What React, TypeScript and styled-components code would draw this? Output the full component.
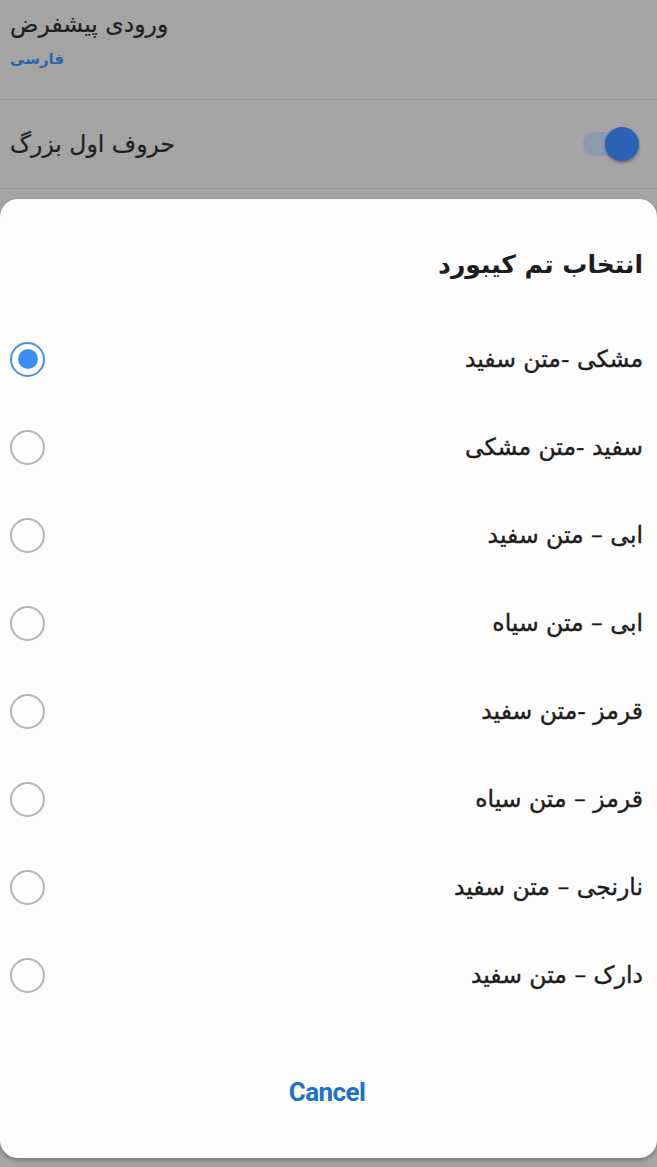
import { useState } from "react";
import styled, { createGlobalStyle } from "styled-components";

const GlobalStyle = createGlobalStyle`
  html, body {
    margin: 0;
    padding: 0;
    background: #a4a4a4;
  }
  body {
    font-family: "DejaVu Sans", "Noto Sans", sans-serif;
  }
`;

const Page = styled.div`
  width: 657px;
  height: 1167px;
  overflow: hidden;
  display: flex;
  flex-direction: column;
  background: #a4a4a4;
`;

const SettingRow = styled.div<{ height: number }>`
  height: ${({ height }) => height}px;
  box-sizing: border-box;
  padding: 0 22px 0 10px;
  display: flex;
  align-items: center;
  justify-content: space-between;
  border-bottom: 1px solid #959595;
`;

const SettingText = styled.div`
  display: flex;
  flex-direction: column;
  align-items: flex-start;
  gap: 12px;
  margin-top: -22px;
`;

const SettingTitle = styled.div`
  font-size: 23.5px;
  color: #1e1e1e;
  -webkit-text-stroke: 0.2px #1e1e1e;
`;

const SettingValue = styled.div`
  font-size: 15px;
  font-weight: bold;
  color: #2c66ad;
`;

const Toggle = styled.div`
  position: relative;
  width: 52px;
  height: 24px;
  border-radius: 12px;
  background: #8c9ab0;
`;

const ToggleThumb = styled.div`
  position: absolute;
  right: -4px;
  top: -5px;
  width: 34px;
  height: 34px;
  border-radius: 50%;
  background: #2d63b6;
  box-shadow: 0 2px 3px rgba(0, 0, 0, 0.35);
`;

const Sheet = styled.div`
  margin-top: 10px;
  height: 959px;
  background: #fdfdfd;
  border-radius: 18px;
  box-shadow: 0 2px 4px rgba(0, 0, 0, 0.3);
  display: flex;
  flex-direction: column;
`;

const SheetTitle = styled.div`
  padding: 50px 14px 34px;
  line-height: 32px;
  font-size: 25px;
  font-weight: bold;
  color: #1d1d1d;
  text-align: right;
  direction: rtl;
`;

const OptionRow = styled.label`
  height: 88px;
  display: flex;
  align-items: center;
  justify-content: space-between;
  padding: 0 14px 0 10px;
  cursor: pointer;
`;

const Radio = styled.span<{ checked: boolean }>`
  width: 35px;
  height: 35px;
  box-sizing: border-box;
  border-radius: 50%;
  border: 2px solid ${({ checked }) => (checked ? "#4a8fe6" : "#b3b3b3")};
  display: flex;
  align-items: center;
  justify-content: center;
  &::after {
    content: "";
    width: 20px;
    height: 20px;
    border-radius: 50%;
    background: ${({ checked }) => (checked ? "#3d8cf5" : "transparent")};
  }
`;

const OptionLabel = styled.span`
  direction: rtl;
  font-size: 23.5px;
  color: #1d1d1d;
  -webkit-text-stroke: 0.4px #1d1d1d;
`;

const Footer = styled.div`
  padding: 55px 0 48px;
  display: flex;
  justify-content: center;
`;

const CancelButton = styled.button`
  background: none;
  border: 0;
  padding: 0;
  margin-right: 3px;
  line-height: 36px;
  font-family: Roboto, "Liberation Sans", sans-serif;
  font-size: 26px;
  font-weight: bold;
  color: #1b72c8;
  letter-spacing: -0.6px;
  cursor: pointer;
`;

const themes = [
  "مشکی -متن سفید",
  "سفید -متن مشکی",
  "ابی – متن سفید",
  "ابی – متن سیاه",
  "قرمز -متن سفید",
  "قرمز – متن سیاه",
  "نارنجی – متن سفید",
  "دارک – متن سفید",
];

export default function App() {
  const [selected, setSelected] = useState(0);

  return (
    <>
      <GlobalStyle />
      <Page>
        <SettingRow height={100}>
          <SettingText>
            <SettingTitle dir="rtl">ورودی پیشفرض</SettingTitle>
            <SettingValue dir="rtl">فارسی</SettingValue>
          </SettingText>
        </SettingRow>
        <SettingRow height={89}>
          <SettingTitle dir="rtl">حروف اول بزرگ</SettingTitle>
          <Toggle>
            <ToggleThumb />
          </Toggle>
        </SettingRow>
        <Sheet>
          <SheetTitle>انتخاب تم کیبورد</SheetTitle>
          {themes.map((name, i) => (
            <OptionRow key={name} onClick={() => setSelected(i)}>
              <Radio checked={selected === i} />
              <OptionLabel>{name}</OptionLabel>
            </OptionRow>
          ))}
          <Footer>
            <CancelButton>Cancel</CancelButton>
          </Footer>
        </Sheet>
      </Page>
    </>
  );
}
